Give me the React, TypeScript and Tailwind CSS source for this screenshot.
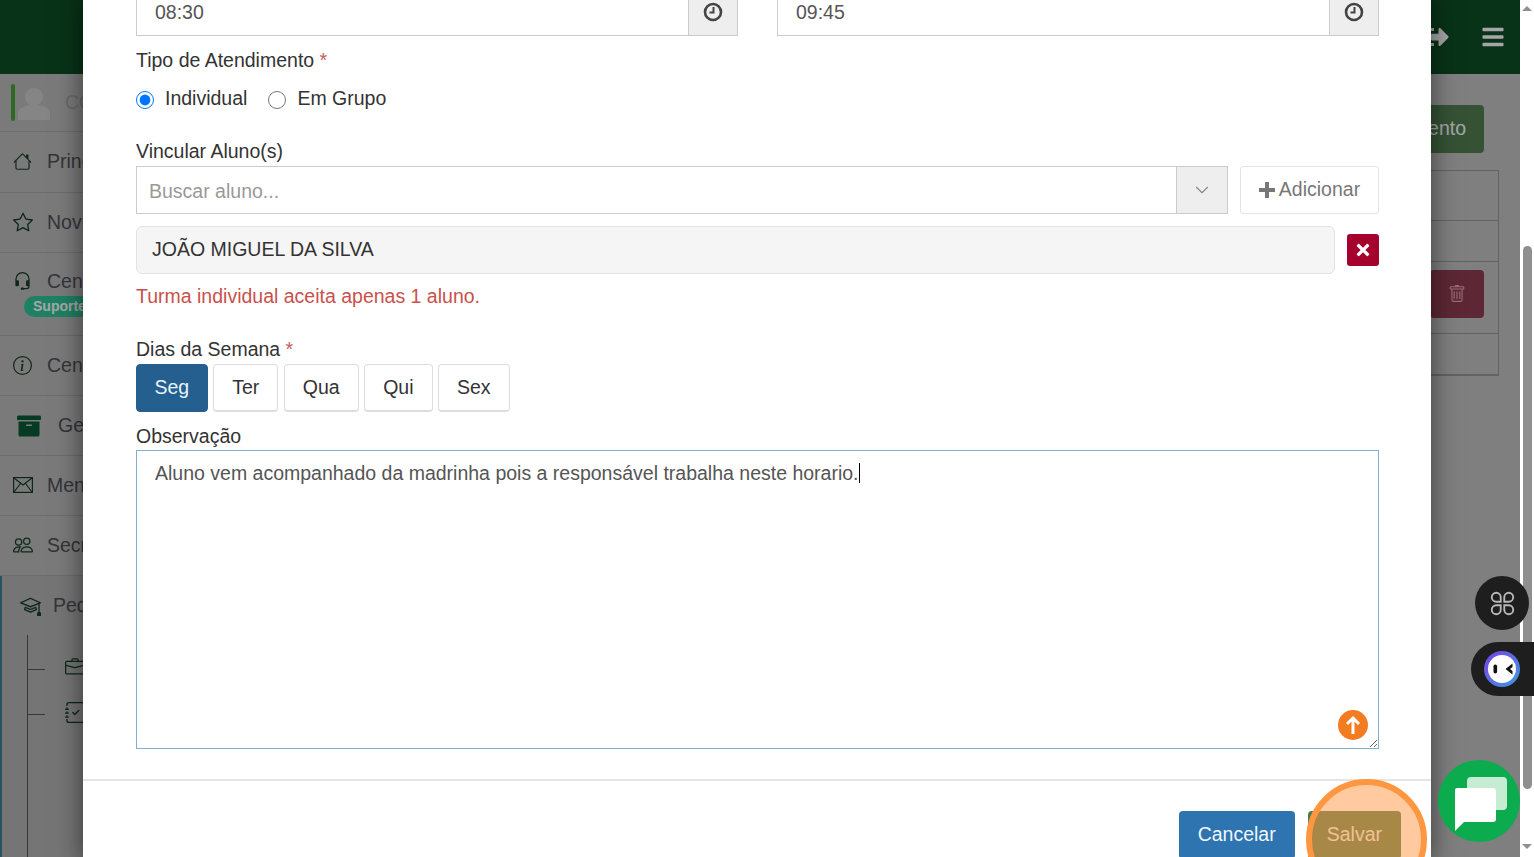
import { BsHouse, BsStar, BsHeadset, BsInfoCircle, BsBriefcase, BsJournalCheck, BsPeople, BsMortarboard, BsTrash } from "react-icons/bs";
import { FaArchive, FaBars, FaSignOutAlt, FaTimes } from "react-icons/fa";
import { ChevronDown } from "lucide-react";
import type { ReactNode } from "react";

const ClockIcon = () => (
  <svg viewBox="0 0 20 20" className="h-[20px] w-[20px]" fill="none" stroke="#444" strokeWidth="2.6">
    <circle cx="10" cy="10" r="8" />
    <path d="M10.5 5v5.5H6.5" strokeWidth="2" />
  </svg>
);

const MailIcon = () => (
  <svg viewBox="0 0 20 16" className="h-[16px] w-[20px]" fill="none" stroke="currentColor" strokeWidth="1.2">
    <rect x="0.6" y="0.6" width="18.8" height="14.8" />
    <path d="M1 1l9 7 9-7M1 15l6.5-8.5M19 15l-6.5-8.5" />
  </svg>
);

const PlusIcon = () => (
  <svg viewBox="0 0 16 16" className="h-[16px] w-[16px]" fill="currentColor">
    <path d="M6 0h4v6h6v4h-6v6H6v-6H0V6h6z" />
  </svg>
);

const TimeInput = ({ value }: { value: string }) => (
  <div className="flex h-12 border border-[#ccc] bg-white">
    <div className="flex flex-1 items-center px-[18px] pt-[2px] text-[#555]">{value}</div>
    <div className="flex w-[49px] items-center justify-center border-l border-[#ccc] bg-[#eee]">
      <ClockIcon />
    </div>
  </div>
);

const Field = ({ children, className }: { children: ReactNode; className: string }) => (
  <div className={`h-6 leading-6 text-[#333] ${className}`}>{children}</div>
);

const SideItem = ({ icon, label, badge, tall }: { icon: ReactNode; label: string; badge?: string; tall?: boolean }) => (
  <div className={`relative flex items-start border-b border-[#a8a8a8] pl-[13px] ${badge ? "h-[83px] pt-[16px]" : tall ? "h-[61px] pt-[17px]" : "h-[60px] pt-[17px]"}`}>
    <span className="flex h-6 w-[34px] items-center text-[#143d28]">{icon}</span>
    <span className="leading-6 text-[#505058]">{label}</span>
    {badge && (
      <span className="absolute left-[24px] top-[43px] rounded-full bg-[#2ec79a] px-[9px] text-[14px] font-bold leading-[21px] text-white">{badge}</span>
    )}
  </div>
);

const Sidebar = () => (
  <aside className="w-[280px] shrink-0 bg-[#bcbcbc] text-[19.5px]">
    <div className="flex h-[58px] items-center border-b border-[#a8a8a8] pl-[11px]">
      <span className="h-[37px] w-[4px] rounded-full bg-[#45a236]" />
      <svg viewBox="0 0 32 32" className="ml-[3px] h-[32px] w-[32px] translate-y-[1px]" fill="#cdcdcd">
        <circle cx="16" cy="9" r="9" />
        <path d="M0 32v-6c0-6 6-9 16-9s16 3 16 9v6z" />
      </svg>
      <span className="ml-[15px] text-[#a0a0a0]">COLÉGIO</span>
    </div>
    <SideItem tall icon={<BsHouse size={19} />} label="Principal" />
    <SideItem icon={<BsStar size={20} />} label="Novidades" />
    <SideItem icon={<BsHeadset size={19} />} label="Central" badge="Suporte" />
    <SideItem icon={<BsInfoCircle size={19} />} label="Central" />
    <div className="flex h-[60px] items-center border-b border-[#a8a8a8] pl-[17px]">
      <FaArchive size={24} className="text-[#0a5a36]" />
      <span className="ml-[17px] text-[#505058]">Gestão</span>
    </div>
    <SideItem icon={<MailIcon />} label="Mensagens" />
    <SideItem icon={<BsPeople size={20} />} label="Secretaria" />
    <div className="h-[400px] border-l-[2px] border-[#3d7f98] bg-[#b4b4b4]">
      <div className="flex h-[59px] items-center pl-[18px]">
        <BsMortarboard size={21} className="text-[#143d28]" />
        <span className="ml-[12px] text-[#505058]">Pedagógico</span>
      </div>
      <div className="ml-[25px] h-[340px] border-l border-[#555]">
        <div className="flex h-[68px] items-center">
          <span className="h-px w-[17px] bg-[#555]" />
          <BsBriefcase size={20} className="ml-[20px] -translate-y-[2px] text-[#143d28]" />
        </div>
        <div className="-mt-[23px] flex h-[68px] items-center">
          <span className="h-px w-[17px] bg-[#555]" />
          <BsJournalCheck size={21} className="ml-[20px] -translate-y-[2px] text-[#143d28]" />
        </div>
      </div>
    </div>
  </aside>
);

const Background = () => (
  <div className="flex h-full flex-col">
    <header className="flex h-[74px] shrink-0 items-center justify-end gap-[32px] bg-[#0d4f26] pr-[15px] text-[#fff]">
      <FaSignOutAlt size={24} />
      <FaBars size={24} />
    </header>
    <div className="flex flex-1">
      <Sidebar />
      <main className="flex-1 bg-[#c4c4c4] pr-[21px] pt-[31px] text-[19.5px]">
        <div className="flex justify-end pr-[15px]">
          <span className="flex h-12 items-center rounded bg-[#527f52] px-[18px] text-white">Novo Atendimento</span>
        </div>
        <div className="ml-auto mt-[17px] w-[800px] border border-b-[2px] border-[#999]">
          <div className="h-[50px] border-b border-[#999]" />
          <div className="h-[41px] border-b border-[#999]" />
          <div className="flex h-[72px] items-start justify-end border-b border-[#999] pr-[14px] pt-[8px]">
            <span className="flex h-12 w-[54px] items-center justify-center rounded bg-[#903c52] text-[#e6a9b8]">
              <BsTrash size={18} />
            </span>
          </div>
          <div className="h-[40px]" />
        </div>
      </main>
    </div>
  </div>
);

const DayButton = ({ label, active }: { label: string; active?: boolean }) => (
  <span
    className={`flex h-12 items-center rounded border ${
      active ? "border-[#245f8f] bg-[#245f8f] px-[17.5px] text-[#e8f2fa]" : "border-[#ddd] border-b-2 bg-white px-[18px] text-[#333]"
    }`}
  >
    {label}
  </span>
);

const Modal = () => (
  <div className="ml-[83px] w-[1348px] bg-white text-[19.5px] shadow-[0_5px_25px_rgba(0,0,0,0.55)]">
    <div className="pb-[30px] pl-[53px] pr-[52px] pt-0">
      <div className="-mt-[12px] grid grid-cols-2 gap-[39px]">
        <TimeInput value="08:30" />
        <TimeInput value="09:45" />
      </div>
      <Field className="mt-3">
        Tipo de Atendimento <span className="text-[#c0605c]">*</span>
      </Field>
      <div className="mt-[15px] flex h-6 items-center text-[#333]">
        <input type="radio" name="tipo" defaultChecked className="m-0 h-[18px] w-[18px] translate-y-[1px]" />
        <span className="ml-[11px]">Individual</span>
        <input type="radio" name="tipo" className="m-0 ml-[21px] h-[18px] w-[18px] translate-y-[1px]" />
        <span className="ml-[11px]">Em Grupo</span>
      </div>
      <Field className="mt-[28px]">Vincular Aluno(s)</Field>
      <div className="mt-[3px] flex gap-3">
        <div className="flex h-12 flex-1 border border-[#ccc]">
          <div className="flex flex-1 items-center px-3 pt-[4px] text-[#999]">Buscar aluno...</div>
          <div className="flex w-[51px] items-center justify-center border-l border-[#ccc] bg-[#eee] text-[#888]">
            <ChevronDown size={22} strokeWidth={1.2} />
          </div>
        </div>
        <button className="flex h-12 w-[139px] items-center justify-center gap-1 rounded-[3px] border border-[#e3e3e3] bg-white text-[#777]">
          <PlusIcon />
          Adicionar
        </button>
      </div>
      <div className="mt-3 flex items-center gap-3">
        <div className="flex h-12 flex-1 items-center rounded-md border border-[#e3e3e3] bg-[#f5f5f5] px-[15px] text-[#333]">
          JOÃO MIGUEL DA SILVA
        </div>
        <button className="flex h-8 w-8 items-center justify-center rounded-[3px] bg-[#a6022e] text-white">
          <FaTimes size={18} />
        </button>
      </div>
      <div className="mt-[10px] h-6 leading-6 text-[#c9514c]">Turma individual aceita apenas 1 aluno.</div>
      <Field className="mt-[29px]">
        Dias da Semana <span className="text-[#c0605c]">*</span>
      </Field>
      <div className="mt-[3px] flex gap-[5.5px]">
        <DayButton label="Seg" active />
        <DayButton label="Ter" />
        <DayButton label="Qua" />
        <DayButton label="Qui" />
        <DayButton label="Sex" />
      </div>
      <Field className="mt-3">Observação</Field>
      <div className="relative mt-[2px] h-[299px] resize overflow-auto border border-[#7fb0cf] px-[18px] py-[9px] leading-6 text-[#555]">
        Aluno vem acompanhado da madrinha pois a responsável trabalha neste horario.
        <span className="inline-block h-[20px] w-px translate-y-[3px] bg-black" />
      </div>
    </div>
    <div className="flex justify-end gap-[13px] border-t-[2px] border-[#e5e5e5] pr-[30px] pt-[30px]">
      <button className="flex h-12 items-center rounded bg-[#2e74b0] px-[19px] text-[#f0f7fc]">Cancelar</button>
      <button className="flex h-12 items-center rounded bg-[#4f7a4f] px-[19px] text-white/85">Salvar</button>
    </div>
  </div>
);

const Scrollbar = () => (
  <div className="flex w-[14px] shrink-0 flex-col items-center bg-white">
    <span className="mt-[6px] h-0 w-0 border-x-[5px] border-b-[5px] border-x-transparent border-b-[#8f8f8f]" />
    <span className="mt-[235px] h-[543px] w-[9px] rounded-full bg-[#8f8f8f]" />
    <span className="mt-[55px] h-0 w-0 border-x-[5px] border-t-[5px] border-x-transparent border-t-[#8f8f8f]" />
  </div>
);

const App = () => {
  return (
    <div className="relative flex h-[857px] w-[1534px] overflow-hidden bg-white font-['Liberation_Sans',Arial,sans-serif]">
      <div className="relative h-full w-[1520px] overflow-hidden">
        <Background />
        <div className="absolute inset-0 overflow-hidden bg-black/35">
          <Modal />
        </div>
      </div>
      <Scrollbar />

      {/* upload badge over the textarea */}
      <span className="absolute left-[1338px] top-[710px] flex h-[30px] w-[30px] items-center justify-center rounded-full bg-[#f47c20]">
        <svg viewBox="0 0 20 20" className="h-[20px] w-[20px]" fill="none" stroke="#fff" strokeWidth="3">
          <path d="M10 19V3M4 9l6-6 6 6" />
        </svg>
      </span>

      {/* highlight ring over Salvar */}
      <span className="absolute left-[1306px] top-[779px] h-[121px] w-[121px] rounded-full border-[6px] border-[#ff9640] bg-[#ff9640]/50" />

      <span className="absolute left-[1475px] top-[576px] flex h-[54px] w-[54px] items-center justify-center rounded-full bg-[#1e1e1e]">
        <svg viewBox="0 0 24 24" className="h-[25px] w-[25px]" fill="none" stroke="#b9b9b9" strokeWidth="1.8">
          <path d="M10.3 10.3H6a4.3 4.3 0 1 1 4.3-4.3zM13.7 10.3V6a4.3 4.3 0 1 1 4.3 4.3zM10.3 13.7V18a4.3 4.3 0 1 1-4.3-4.3zM13.7 13.7H18a4.3 4.3 0 1 1-4.3 4.3z" />
        </svg>
      </span>

      <span className="absolute left-[1471px] top-[642px] flex h-[54px] w-[63px] items-center rounded-l-full bg-[#1e1e1e] pl-[13px]">
        <svg viewBox="0 0 36 36" className="h-[36px] w-[36px]">
          <defs>
            <linearGradient id="botRing" x1="0" y1="0" x2="1" y2="1">
              <stop offset="0" stopColor="#7b3fe4" />
              <stop offset="1" stopColor="#3b9be0" />
            </linearGradient>
          </defs>
          <circle cx="18" cy="18" r="18" fill="url(#botRing)" />
          <circle cx="18" cy="18" r="14" fill="#fff" />
          <rect x="9.5" y="13.5" width="3.6" height="9" rx="1.8" fill="#111" />
          <path d="M28.5 12.5 21.5 18l7 5.5v-3.6L26 18l2.5-1.9z" fill="#111" />
        </svg>
      </span>

      <span className="absolute left-[1438px] top-[760px] h-[82px] w-[82px] rounded-full bg-[#0bab4e]">
        <svg viewBox="0 0 82 82" className="h-[82px] w-[82px]">
          <rect x="29" y="17" width="40" height="33" rx="4" fill="#c6ecd3" />
          <path d="M19 28h36a3 3 0 0 1 3 3v28a3 3 0 0 1-3 3H26l-9 9V30a2 2 0 0 1 2-2z" fill="#fff" />
        </svg>
      </span>
    </div>
  );
};

export default App;
